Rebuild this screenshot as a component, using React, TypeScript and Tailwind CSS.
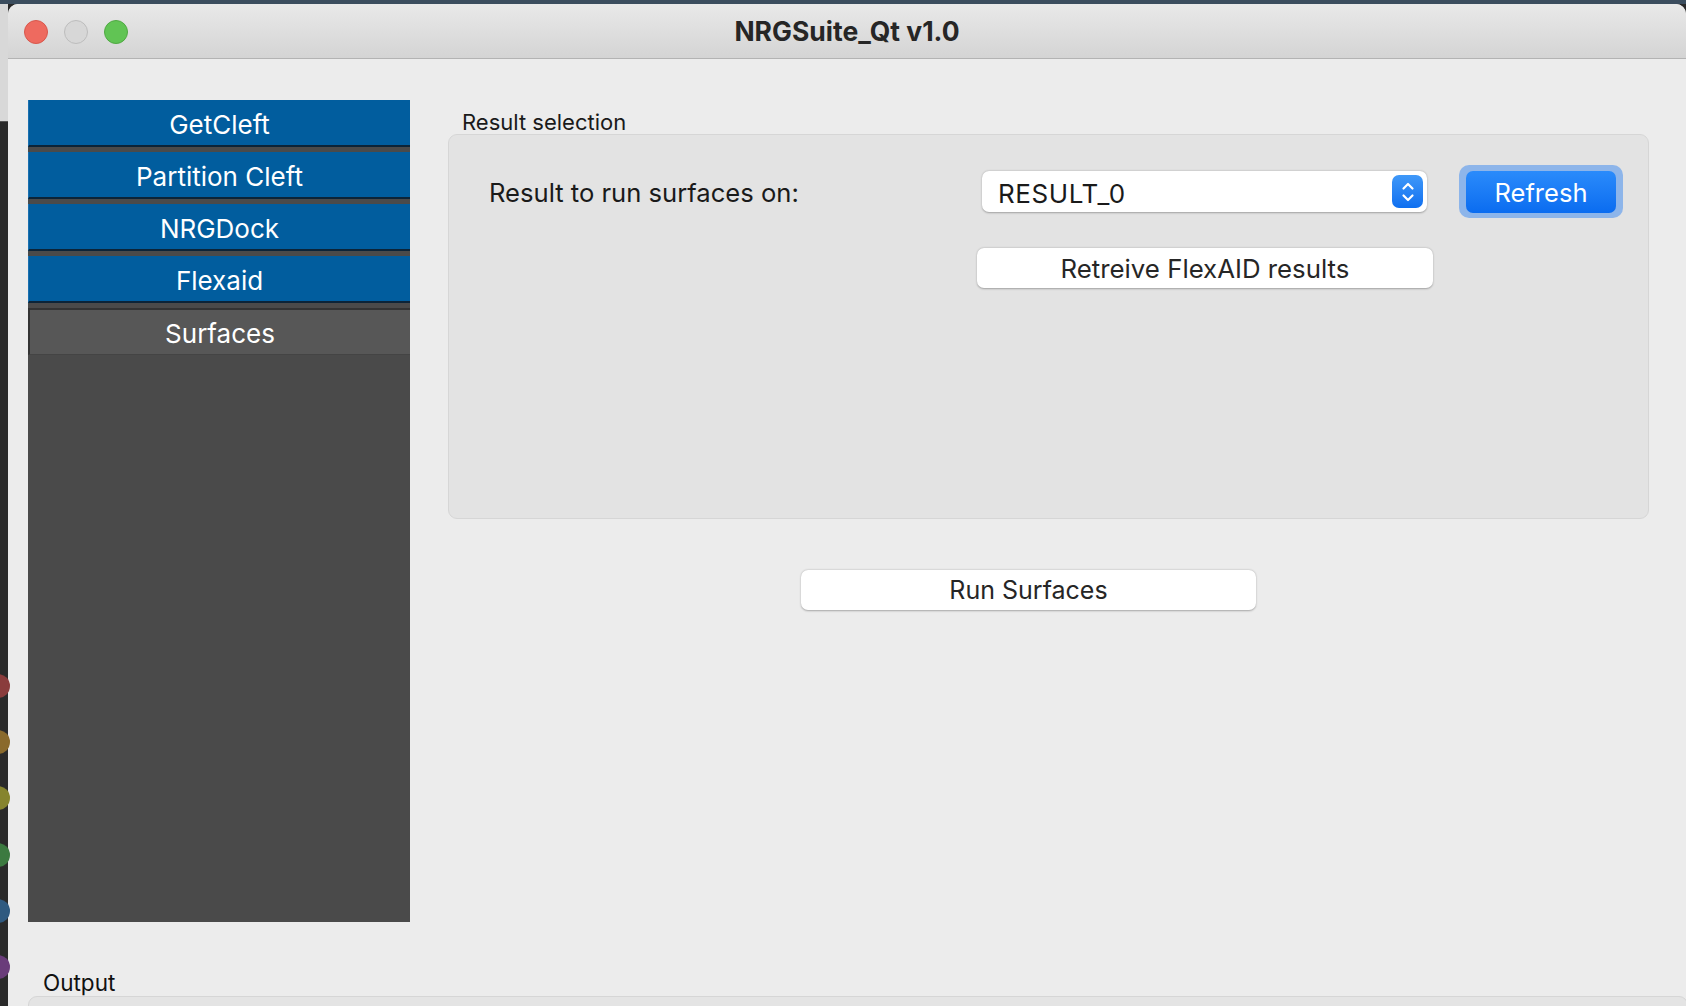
import React from "react";

const font = "font-['Inter','Liberation_Sans',sans-serif]";

function SideButton({ label, active }: { label: string; active?: boolean }) {
  if (active) {
    return (
      <div className="h-[47px] flex items-center justify-center pt-[3px] bg-[#575757] border-t-2 border-l-2 border-[#333333] border-b border-b-[#444444] text-white text-[26px] leading-none">
        {label}
      </div>
    );
  }
  return (
    <div className="h-[47px] mb-[5px] flex items-center justify-center pt-[4px] bg-[#015d9e] border-l border-l-[#1a70b0] border-b-2 border-b-[#0c2438] text-white text-[26px] leading-none">
      {label}
    </div>
  );
}

function Stepper() {
  return (
    <div className="w-[31px] h-[33px] rounded-[7px] bg-gradient-to-b from-[#3f98f8] to-[#0d6ff0] flex items-center justify-center">
      <svg width="16" height="24" viewBox="0 0 16 24" fill="none" stroke="white" strokeWidth="2.2" strokeLinecap="round" strokeLinejoin="round">
        <path d="M3.5 8.5 L8 4 L12.5 8.5" />
        <path d="M3.5 15.5 L8 20 L12.5 15.5" />
      </svg>
    </div>
  );
}

export default function App() {
  return (
    <div className={`w-[1686px] h-[1006px] overflow-hidden bg-[#2a2a2a] flex flex-col ${font}`}>
      <div className="h-[4px] bg-[#3b4d5e] shrink-0" />
      <div className="flex flex-1 min-h-0">
        {/* desktop strip */}
        <div className="w-[8px] shrink-0 flex flex-col relative">
          <div className="h-[118px] bg-[#d8d8d8] border-b border-[#555]" />
          <div className="flex-1 bg-[#2a2a2a]" />
          <div className="absolute left-[-14px] top-[670px] w-[24px] h-[24px] rounded-full bg-[#8a3c3c]" />
          <div className="absolute left-[-14px] top-[726px] w-[24px] h-[24px] rounded-full bg-[#8a6a2c]" />
          <div className="absolute left-[-14px] top-[782px] w-[24px] h-[24px] rounded-full bg-[#86842e]" />
          <div className="absolute left-[-14px] top-[839px] w-[24px] h-[24px] rounded-full bg-[#3c7a40]" />
          <div className="absolute left-[-14px] top-[895px] w-[24px] h-[24px] rounded-full bg-[#2f5a80]" />
          <div className="absolute left-[-14px] top-[951px] w-[24px] h-[24px] rounded-full bg-[#6a3c7a]" />
        </div>
        {/* window */}
        <div className="w-[1678px] shrink-0 flex flex-col rounded-t-[10px] overflow-hidden bg-[#ececec]">
          <div className="h-[55px] shrink-0 relative flex items-center justify-center bg-gradient-to-b from-[#e9e9e9] to-[#d4d4d4] border-b border-[#b3b3b3]">
            <div className="absolute left-[16px] top-[16px] flex gap-[16px]">
              <div className="w-[24px] h-[24px] rounded-full bg-[#ee6a5f] border border-[#d8574c]" />
              <div className="w-[24px] h-[24px] rounded-full bg-[#d7d7d7] border border-[#bdbdbd]" />
              <div className="w-[24px] h-[24px] rounded-full bg-[#61c454] border border-[#50a943]" />
            </div>
            <span className="text-[26.5px] font-bold text-[#262626] mt-[1px]">NRGSuite_Qt v1.0</span>
          </div>

          <div className="flex-1 flex flex-col pl-[20px] pt-[41px]">
            <div className="flex">
              {/* sidebar */}
              <div className="w-[382px] h-[822px] bg-[#4a4a4a] flex flex-col shrink-0">
                <SideButton label="GetCleft" />
                <SideButton label="Partition Cleft" />
                <SideButton label="NRGDock" />
                <SideButton label="Flexaid" />
                <SideButton label="Surfaces" active />
              </div>

              {/* right panel */}
              <div className="ml-[38px] w-[1201px] flex flex-col">
                <div className="mt-[10px] h-[24px] pl-[14px] text-[22px] leading-[24px] text-[#1a1a1a]">Result selection</div>
                <div className="h-[385px] rounded-[9px] bg-[#e3e3e3] border border-[#d6d6d6] pt-[30px] pl-[40px]">
                  <div className="flex items-center h-[53px]">
                    <div className="w-[493px] text-[25.6px] text-[#1a1a1a] pt-[4px]">Result to run surfaces on:</div>
                    <div className="w-[445px] h-[41px] rounded-[7px] bg-white shadow-[0_0.5px_2px_rgba(0,0,0,0.3)] flex items-center justify-between pl-[16px] pr-[4px]">
                      <span className="text-[26px] tracking-[0.6px] text-[#1a1a1a] pt-[3px]">RESULT_0</span>
                      <Stepper />
                    </div>
                    <div className="ml-[32px] w-[164px] h-[53px] rounded-[10px] bg-[#8db5ea] flex items-center justify-center">
                      <div className="w-[150px] h-[42px] rounded-[7px] bg-gradient-to-b from-[#2a8bfb] to-[#0a6cf0] flex items-center justify-center pt-[3px] text-white text-[25.5px]">
                        Refresh
                      </div>
                    </div>
                  </div>
                  <div className="mt-[30px] ml-[488px] w-[456px] h-[40px] rounded-[7px] bg-white shadow-[0_0.5px_2px_rgba(0,0,0,0.3)] flex items-center justify-center pt-[2px] text-[25.8px] text-[#262626]">
                    Retreive FlexAID results
                  </div>
                </div>
                <div className="mt-[51px] ml-[353px] w-[455px] h-[40px] rounded-[7px] bg-white shadow-[0_0.5px_2px_rgba(0,0,0,0.3)] flex items-center justify-center pt-[2px] text-[25px] text-[#262626]">
                  Run Surfaces
                </div>
              </div>
            </div>

            <div className="mt-[47px] pl-[15px] h-[24px] text-[22.5px] leading-[24px] text-[#111111] pt-[2px]">Output</div>
            <div className="mt-[3px] w-[1660px] h-[40px] rounded-t-[9px] bg-[#e4e4e4] border border-[#d6d6d6]" />
          </div>
        </div>
      </div>
    </div>
  );
}
